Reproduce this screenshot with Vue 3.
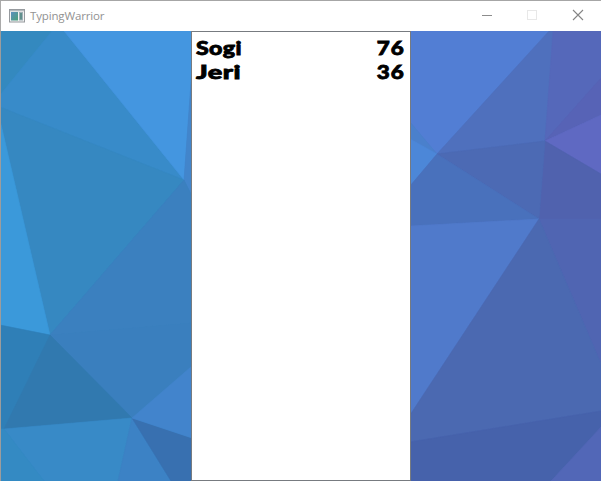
<script setup>
const scores = [
  { name: 'Sogi', points: 76 },
  { name: 'Jeri', points: 36 },
]

const facets = [
  { fill: '#3489bf', points: '0,31 54,31 0,97' },
  { fill: '#388bc9', points: '52,31 64,31 184,180 0,107 0,95' },
  { fill: '#4496e0', points: '64,31 192,31 192,68 184,180' },
  { fill: '#4285cb', points: '192,68 192,196 184,180' },
  { fill: '#3688c1', points: '0,107 184,180 50,335 0,122' },
  { fill: '#3b99da', points: '0,120 50,335 0,325' },
  { fill: '#3b80bf', points: '184,180 192,196 192,323 50,335' },
  { fill: '#3a7fbe', points: '50,335 192,323 192,366 132,418' },
  { fill: '#2f7fb7', points: '0,325 50,335 4,429 0,431' },
  { fill: '#3179af', points: '50,335 132,418 4,429' },
  { fill: '#388ac7', points: '4,429 132,418 118,481 44,481' },
  { fill: '#348ac3', points: '0,429 4,429 44,481 0,481' },
  { fill: '#3c82c5', points: '132,418 171,481 118,481' },
  { fill: '#3870b0', points: '132,418 192,438 192,481 171,481' },
  { fill: '#4284cc', points: '132,418 192,366 192,438' },
  { fill: '#527ed4', points: '410,31 550,31 437,154 410,122' },
  { fill: '#4a80cc', points: '410,122 437,154 410,140' },
  { fill: '#4c87d8', points: '410,139 437,154 410,186' },
  { fill: '#4f70bd', points: '549,31 554,31 545,141 437,154' },
  { fill: '#5568ba', points: '553,31 601,31 601,79 545,141' },
  { fill: '#5763b6', points: '601,78 601,115 545,141' },
  { fill: '#5f69c2', points: '545,141 601,115 601,174' },
  { fill: '#5062ae', points: '545,141 601,174 601,219 539,219' },
  { fill: '#4c6ab4', points: '437,154 545,141 539,219' },
  { fill: '#4971bc', points: '437,154 539,219 410,226 410,186' },
  { fill: '#507acb', points: '410,226 539,219 410,415' },
  { fill: '#5065b2', points: '539,219 601,219 601,364' },
  { fill: '#4b69b1', points: '539,219 601,364 601,411 410,442 410,415' },
  { fill: '#4662ab', points: '410,442 601,411 601,428 551,481 410,481' },
  { fill: '#5267b7', points: '601,427 601,481 551,481' },
]
</script>

<template>
  <div class="window">
    <header class="titlebar">
      <svg class="app-icon" viewBox="0 0 16 14">
        <defs>
          <linearGradient id="pane" x1="0" y1="0" x2="1" y2="1">
            <stop offset="0" stop-color="#5c8fc0" />
            <stop offset="1" stop-color="#4ba078" />
          </linearGradient>
        </defs>
        <rect x="0.5" y="0.5" width="15" height="12.5" fill="#f2f2f2" stroke="#969a9e" />
        <rect x="1" y="1" width="14" height="1.3" fill="#b4babe" />
        <rect x="2" y="3" width="7" height="8.5" fill="url(#pane)" />
        <rect x="10" y="3" width="4" height="8.5" fill="#9fb0b6" />
        <rect x="11" y="4" width="2" height="6.5" fill="#5f8f8c" />
      </svg>
      <span class="title">TypingWarrior</span>
      <div class="controls">
        <svg viewBox="0 0 46 30"><path d="M17 14.5h10" stroke="#8c8c8c" /></svg>
        <svg viewBox="0 0 46 30"><rect x="16.5" y="9.5" width="9" height="9" fill="none" stroke="#e8e8e8" /></svg>
        <svg viewBox="0 0 46 30"><path d="M16 9l10 10M26 9l-10 10" stroke="#858585" stroke-width="1.1" /></svg>
      </div>
    </header>
    <main class="stage">
      <svg class="backdrop" viewBox="0 31 601 450" preserveAspectRatio="none">
        <rect x="0" y="31" width="300" height="450" fill="#3883c2" />
        <rect x="300" y="31" width="301" height="450" fill="#4d6cb8" />
        <polygon v-for="(facet, i) in facets" :key="i" :points="facet.points" :fill="facet.fill" :stroke="facet.fill" stroke-width="0.6" stroke-linejoin="round" />
      </svg>
      <section class="board">
        <div v-for="row in scores" :key="row.name" class="row">
          <span class="name">{{ row.name }}</span>
          <span class="points">{{ row.points }}</span>
        </div>
      </section>
    </main>
  </div>
</template>

<style>
body {
  margin: 0;
  overflow: hidden;
}
</style>

<style scoped>
.window {
  box-sizing: border-box;
  width: 601px;
  height: 481px;
  display: flex;
  flex-direction: column;
  border-top: 1px solid #a6a6a6;
  background: #fff;
}
.titlebar {
  box-sizing: border-box;
  height: 30px;
  flex: none;
  display: flex;
  align-items: center;
  padding-left: 8px;
  border-left: 1px solid #aaa;
}
.app-icon {
  width: 16px;
  height: 14px;
  flex: none;
}
.title {
  margin-left: 5px;
  font: 11.5px/16px "Open Sans", "Noto Sans", sans-serif;
  letter-spacing: -0.15px;
  color: #929292;
}
.controls {
  display: flex;
  margin-left: auto;
  margin-right: -2px;
}
.controls svg {
  width: 46px;
  height: 30px;
  display: block;
}
.stage {
  height: 450px;
  display: grid;
  grid-template-columns: 190px 220px 190px;
  border-left: 1px solid #9c9c9c;
}
.backdrop {
  grid-area: 1 / 1 / 2 / 4;
  width: 601px;
  height: 450px;
  margin-left: -1px;
  clip-path: inset(0 0 0 1px);
}
.board {
  grid-area: 1 / 2 / 2 / 3;
  box-sizing: border-box;
  height: 450px;
  position: relative;
  padding: 4px 5px 0 4px;
  background: #fff;
  border: 1px solid #777b80;
}
.row {
  display: flex;
  justify-content: space-between;
  height: 24px;
  font: 900 19px/24px Lato, "Liberation Sans", sans-serif;
  color: #000;
  -webkit-text-stroke: 0.8px #000;
}
.name {
  transform: scaleX(1.22);
  transform-origin: left;
  letter-spacing: 0.3px;
}
.row:nth-child(2) .name {
  transform: scaleX(1.43);
}
.points {
  transform: scaleX(1.18);
  transform-origin: right;
  letter-spacing: 0.8px;
}
</style>
